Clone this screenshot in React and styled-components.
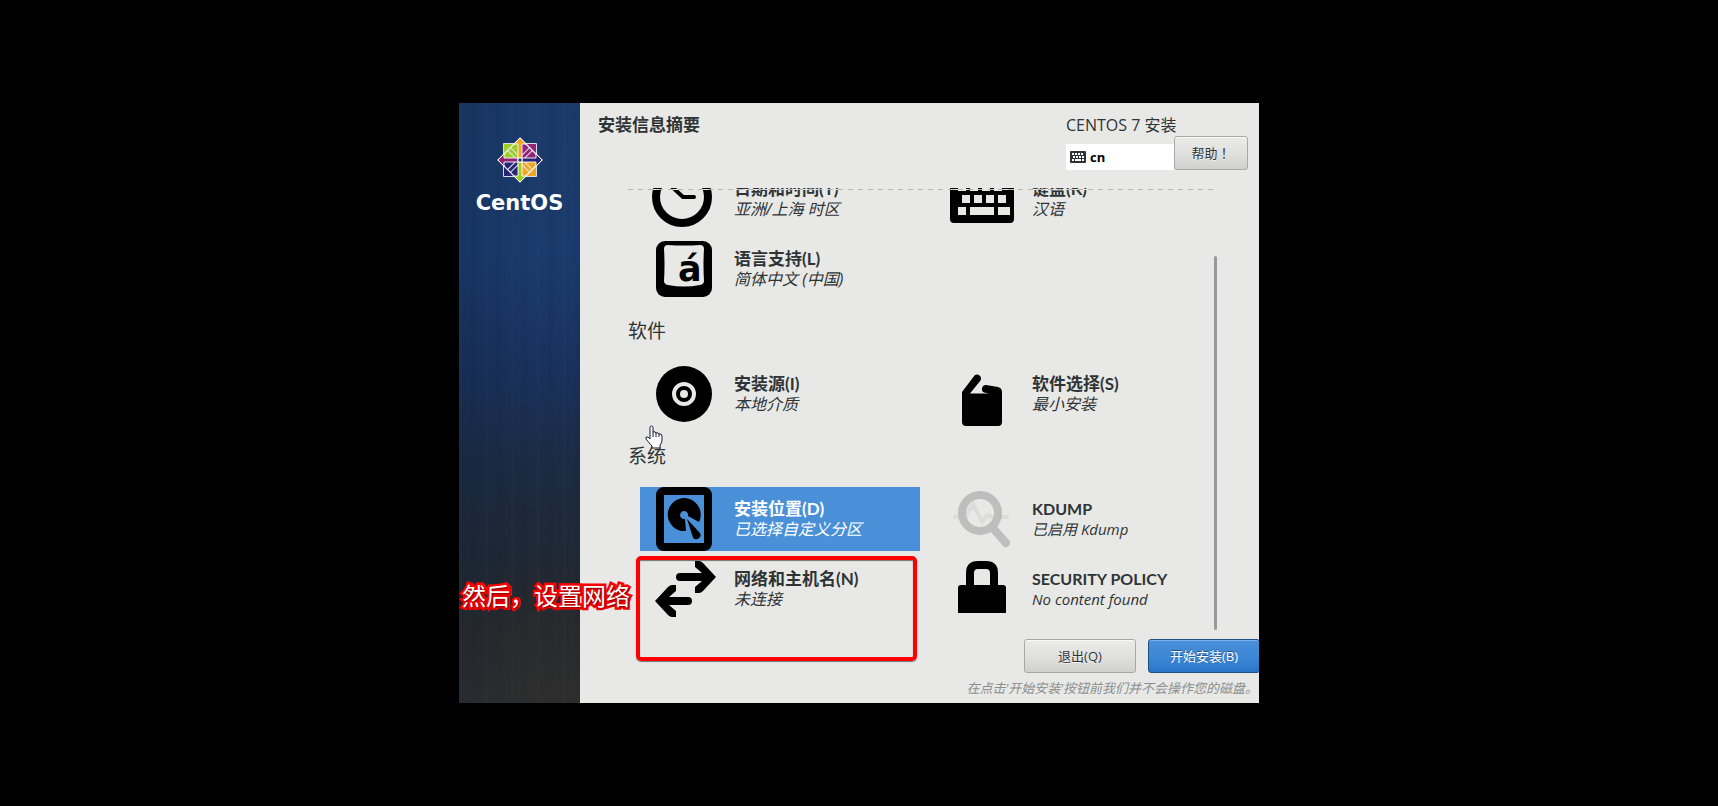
import React from 'react';
import styled, { createGlobalStyle } from 'styled-components';

const GlobalStyle = createGlobalStyle`
  *, *::before, *::after {
    box-sizing: border-box;
  }

  body {
    margin: 0;
    background: #000;
    color: #2e3436;
    font-family: 'Open Sans', 'Noto Sans CJK SC', sans-serif;
  }

  button {
    font-family: inherit;
  }

  h1, h2, p {
    margin: 0;
  }
`;

const Screen = styled.div`
  display: flex;
  align-items: center;
  justify-content: center;
  min-height: 100vh;
`;

const Installer = styled.div`
  position: relative; /* Anchor for the callout and the pointer */
  width: 100%;
  max-width: 800px;
`;

const Frame = styled.div`
  display: flex;
  overflow: hidden;
  background: #e8e8e6;
`;

const Sidebar = styled.aside`
  display: flex;
  flex-direction: column;
  align-items: center;
  flex: 0 0 121px;
  padding-top: 34px;
  background:
    linear-gradient(90deg, rgba(12, 28, 52, 0.2), rgba(12, 28, 52, 0) 60%),
    repeating-linear-gradient(90deg, rgba(255, 255, 255, 0.01) 0 3px, transparent 3px 11px, rgba(0, 0, 0, 0.03) 11px 17px, transparent 17px 26px),
    linear-gradient(#1b3a69 0%, #1a3b6d 25%, #19315c 45%, #1c2b43 60%, #1f2834 76%, #292a2c 88%, #2e2e2e 100%);
`;

const Brand = styled.div`
  margin-top: 7px;
  color: #fff;
  font: bold 21px/26px 'DejaVu Sans', sans-serif;
`;

const Main = styled.main`
  display: flex;
  flex-direction: column;
  flex: 1;
  min-width: 0;
`;

const Header = styled.header`
  display: flex;
  justify-content: space-between;
  padding: 10px 11px 18px 18px;
`;

const Title = styled.h1`
  font-size: 17px;
  font-weight: bold;
  line-height: 24px;
`;

const Product = styled.div`
  display: grid;
  grid-template-columns: 108px 74px;
  align-items: end;
`;

const ProductName = styled.p`
  grid-column: 1 / -1;
  font-size: 16px;
  line-height: 24px;
`;

const LayoutIndicator = styled.button`
  display: flex;
  align-items: center;
  gap: 4px;
  height: 26px;
  padding: 0 4px;
  border: 0;
  background: #fff;
  color: #000;
  font-size: 13px;
  font-weight: bold;
`;

const Button = styled.button`
  height: 34px;
  padding: 0 0 2px;
  border: 1px solid ${({ $primary }) => ($primary ? '#1c5187' : '#a8a8a6')};
  border-radius: 3px;
  background: ${({ $primary }) =>
    $primary ? 'linear-gradient(#4a90d9, #3a85d4 60%, #2a76c6)' : 'linear-gradient(#ebebea, #dededc 60%, #d0d0ce)'};
  box-shadow: inset 0 1px ${({ $primary }) => ($primary ? '#77b0ea' : '#f8f8f8')};
  color: ${({ $primary }) => ($primary ? '#fff' : '#2e3436')};
  font-size: 13px;
  text-shadow: ${({ $primary }) => ($primary ? '0 -1px rgba(0, 0, 0, 0.4)' : '0 1px rgba(255, 255, 255, 0.7)')};
`;

const HelpButton = styled(Button)`
  margin-top: -1px;
  font-family: 'Open Sans', 'Noto Sans CJK TC', sans-serif;
`;

const Viewport = styled.div`
  position: relative;
  margin: 0 41px 0 48px;
  overflow: hidden;

  /* Edge shown while there is more content above */
  &::before {
    content: '';
    position: absolute;
    top: 1px;
    left: 0;
    right: 4px;
    height: 1px;
    background: repeating-linear-gradient(90deg, #b4b5b4 0 5px, #e8e8e6 5px 10px);
  }
`;

const ScrollThumb = styled.div`
  position: absolute;
  top: 68px;
  right: 1px;
  bottom: 0;
  width: 3px;
  border-radius: 2px;
  background: #969a9a;
`;

/* Scrolled down a little, so the first row is partly cut off */
const Hub = styled.div`
  margin-top: -21px;
  padding: 0 0 9px;
`;

const SectionTitle = styled.h2`
  margin: 18px 0;
  font-size: 19px;
  font-weight: normal;
  line-height: 25px;
`;

const SpokeGrid = styled.div`
  display: grid;
  grid-template-columns: 1fr 1fr;
  gap: 6px 18px;
  padding-left: 12px;
`;

const Spoke = styled.button`
  display: flex;
  align-items: center;
  gap: 18px;
  padding: 0 0 0 12px;
  border: 0;
  background: ${({ $selected }) => ($selected ? '#4a90d9' : 'transparent')};
  color: ${({ $selected }) => ($selected ? '#fff' : '#2e3436')};
  text-align: left;
  white-space: nowrap;

  svg {
    flex: none;
    color: ${({ disabled }) => (disabled ? '#bebebe' : '#000')};
  }
`;

const SpokeText = styled.span`
  display: flex;
  flex-direction: column;
  line-height: 21px;
`;

const SpokeName = styled.span`
  font-family: Lato, 'Noto Sans CJK SC', sans-serif;
  font-size: ${({ $latin }) => ($latin ? '16px' : '17px')};
  font-weight: bold;
`;

const SpokeStatus = styled.span`
  font-size: ${({ $latin }) => ($latin ? '15px' : '16px')};
  font-style: italic;
`;

const Footer = styled.footer`
  padding: 9px 0 4px;
`;

const Actions = styled.div`
  display: grid;
  grid-template-columns: 112px 112px;
  justify-content: end;
  gap: 12px;
  margin-right: -1px;
`;

const Note = styled.p`
  margin: 5px 1px 0 0;
  color: #8b8f8f;
  font-size: 13px;
  font-style: italic;
  line-height: 21px;
  text-align: right;
`;

const Callout = styled.div`
  position: absolute;
  top: 453px;
  left: 177px;
  width: 281px;
  height: 105px;
  border: 4px solid #f00;
  border-radius: 5px;
  box-shadow: 0 1px 1px rgba(0, 0, 0, 0.5), inset 0 1px 1px rgba(0, 0, 0, 0.5);
  pointer-events: none;
`;

const CalloutLabel = styled.div`
  position: absolute;
  top: 475px;
  left: 3px;
  color: #fff;
  font-size: 24px;
  line-height: 36px;
  white-space: nowrap;
  paint-order: stroke fill;
  -webkit-text-stroke: 5px #f00;
  text-shadow: 1px 1px 2px rgba(0, 0, 0, 0.6);
`;

const Pointer = styled.svg`
  position: absolute;
  top: 322px;
  left: 186px;
`;

const Icon = ({ children }) => (
  <svg width="64" height="64" viewBox="0 0 64 64" fill="currentColor" aria-hidden="true">
    {children}
  </svg>
);

const ClockIcon = () => (
  <Icon>
    <circle cx="30" cy="30" r="26" fill="none" stroke="currentColor" strokeWidth="8" />
    <path d="M18 18L31 30H42" fill="none" stroke="currentColor" strokeWidth="4" strokeLinecap="round" strokeLinejoin="round" />
  </Icon>
);

const KeyboardIcon = () => (
  <Icon>
    <rect y="8" width="64" height="48" rx="4" />
    <g fill="#e8e8e6">
      {[8, 20, 32, 44].map((x) => (
        <rect key={x} x={x} y="16" width="8" height="8" />
      ))}
      {[12, 24, 36, 48].map((x) => (
        <rect key={x} x={x} y="28" width="8" height="8" />
      ))}
      <path d="M8 40h8v8H8zM20 40h24v8H20zM48 40h12v8H48z" />
    </g>
  </Icon>
);

const LanguageIcon = () => (
  <Icon>
    <rect x="4" y="4" width="56" height="56" rx="9" />
    <path d="M16 8Q32 9 48 8Q52 8 52 12Q51 28 52 44Q52 47 48 48Q32 51 16 48Q12 47 12 44Q13 28 12 12Q12 8 16 8Z" fill="#e8e8e6" />
    <text x="26" y="44" fontFamily="DejaVu Sans, sans-serif" fontSize="35" fontWeight="bold">á</text>
  </Icon>
);

const DiscIcon = () => (
  <Icon>
    <circle cx="32" cy="32" r="28" />
    <circle cx="32" cy="32" r="10" fill="none" stroke="#e8e8e6" strokeWidth="4" />
    <circle cx="32" cy="32" r="4" fill="#e8e8e6" />
  </Icon>
);

const PackageIcon = () => (
  <Icon>
    <path d="M12 30L24.500 13.500A4 4 0 0 1 30.500 18.500L20 31.500H39L34 30.500A4 4 0 0 1 36 23L48 25Q52 26 52 30V60Q52 64 48 64H16Q12 64 12 60Z" />
  </Icon>
);

const DiskIcon = () => (
  <Icon>
    <path fillRule="evenodd" d="M12 0H52A8 8 0 0 1 60 8V56A8 8 0 0 1 52 64H12A8 8 0 0 1 4 56V8A8 8 0 0 1 12 0ZM12 8V56H52V8Z" />
    <path d="M33 32A4 4 0 1 1 36 29L47 35A16.500 16.500 0 1 0 34 44Z" />
    <path d="M35 32L47.500 45.500A4 4 0 1 1 41 50.500Z" />
  </Icon>
);

const NetworkIcon = () => (
  <Icon>
    <path d="M28 16H50L43 10V4H47Q49 4 51 6L64 20L51 34Q49 36 47 36H43V30L50 24H28A4 4 0 0 1 28 16Z" />
    <path d="M36 40H17L24 34V28H20Q18 28 16 30L3 44L16 58Q18 60 20 60H24V54L17 48H36A4 4 0 0 0 36 40Z" />
  </Icon>
);

const KdumpIcon = () => (
  <Icon>
    <path d="M3 30H15L23 17L32 34L38 28L42 30H59" fill="none" stroke="#dcdcda" strokeWidth="4" />
    <circle cx="30" cy="26" r="18" fill="none" stroke="currentColor" strokeWidth="8" />
    <path d="M42 40L56 56" stroke="currentColor" strokeWidth="8" strokeLinecap="round" />
  </Icon>
);

const LockIcon = () => (
  <Icon>
    <path d="M20 30V16Q20 8 28 8H36Q44 8 44 16V30" fill="none" stroke="currentColor" strokeWidth="8" />
    <path d="M11 28H53Q56 28 56 31V56H8V31Q8 28 11 28Z" />
  </Icon>
);

const SmallKeyboardIcon = () => (
  <svg width="16" height="12" viewBox="0 0 16 12" aria-hidden="true">
    <rect width="16" height="12" rx="1" fill="#2e3436" />
    <path d="M2 3h2M5 3h2M8 3h2M11 3h2M3 6h2M6 6h2M9 6h2M12 6h2M2 9h2M5 9h6M12 9h2" stroke="#fff" strokeWidth="2" />
  </svg>
);

const CentosLogo = () => (
  <svg width="46" height="46" viewBox="-23 -23 46 46" aria-hidden="true">
    <g stroke="#d9dbe6">
      <path d="M-16.500 -16.500H-1V-1H-16.500Z" fill="#9ccd2a" />
      <path d="M1 -16.500H16.500V-1H1Z" fill="#932279" />
      <path d="M-16.500 1H-1V16.500H-16.500Z" fill="#262577" />
      <path d="M1 1H16.500V16.500H1Z" fill="#efa724" />
    </g>
    <path d="M-11 -11L11 11M11 -11L-11 11" stroke="#e4e5ee" strokeWidth="5" />
    <g strokeWidth="3">
      <path d="M-11 -11L-1 -1" stroke="#9ccd2a" />
      <path d="M11 -11L1 -1" stroke="#932279" />
      <path d="M-11 11L-1 1" stroke="#262577" />
      <path d="M11 11L1 1" stroke="#efa724" />
    </g>
    <path d="M0 -22L22 0L0 22L-22 0Z" fill="none" stroke="#fff" strokeWidth="1.200" />
    <g stroke="#fff" strokeWidth="0.900" strokeLinejoin="round">
      <path d="M0 -22L6 -16H2V-2H-2V-16H-6Z" fill="#efa724" />
      <path d="M22 0L16 6V2H2V-2H16V-6Z" fill="#262577" />
      <path d="M0 22L-6 16H-2V2H2V16H6Z" fill="#9ccd2a" />
      <path d="M-22 0L-16 -6V-2H-2V2H-16V6Z" fill="#932279" />
    </g>
    <rect x="-2" y="-2" width="4" height="4" fill="#1b3a69" stroke="#fff" />
  </svg>
);

const sections = [
  {
    spokes: [
      { name: '日期和时间(T)', status: '亚洲/上海 时区', icon: ClockIcon },
      { name: '键盘(K)', status: '汉语', icon: KeyboardIcon },
      { name: '语言支持(L)', status: '简体中文 (中国)', icon: LanguageIcon },
    ],
  },
  {
    title: '软件',
    spokes: [
      { name: '安装源(I)', status: '本地介质', icon: DiscIcon },
      { name: '软件选择(S)', status: '最小安装', icon: PackageIcon },
    ],
  },
  {
    title: '系统',
    spokes: [
      { name: '安装位置(D)', status: '已选择自定义分区', icon: DiskIcon, selected: true },
      { name: 'KDUMP', status: '已启用 Kdump', icon: KdumpIcon, disabled: true, latin: true },
      { name: '网络和主机名(N)', status: '未连接', icon: NetworkIcon },
      { name: 'SECURITY POLICY', status: 'No content found', icon: LockIcon, latin: true },
    ],
  },
];

const Section = ({ title, spokes }) => (
  <section>
    {title && <SectionTitle>{title}</SectionTitle>}
    <SpokeGrid>
      {spokes.map(({ name, status, icon: SpokeIcon, selected, disabled, latin }) => (
        <Spoke key={name} type="button" $selected={selected} disabled={disabled}>
          <SpokeIcon />
          <SpokeText>
            <SpokeName $latin={latin}>{name}</SpokeName>
            <SpokeStatus $latin={latin}>{status}</SpokeStatus>
          </SpokeText>
        </Spoke>
      ))}
    </SpokeGrid>
  </section>
);

const App = () => (
  <>
    <GlobalStyle />
    <Screen>
      <Installer>
        <Frame>
          <Sidebar>
            <CentosLogo />
            <Brand>CentOS</Brand>
          </Sidebar>
          <Main>
            <Header>
              <Title>安装信息摘要</Title>
              <Product>
                <ProductName>CENTOS 7 安装</ProductName>
                <LayoutIndicator type="button">
                  <SmallKeyboardIcon />
                  cn
                </LayoutIndicator>
                <HelpButton type="button">帮助！</HelpButton>
              </Product>
            </Header>
            <Viewport>
              <Hub>
                {sections.map((section, index) => (
                  <Section key={index} {...section} />
                ))}
              </Hub>
              <ScrollThumb />
            </Viewport>
            <Footer>
              <Actions>
                <Button type="button">退出(Q)</Button>
                <Button type="button" $primary>开始安装(B)</Button>
              </Actions>
              <Note>在点击'开始安装'按钮前我们并不会操作您的磁盘。</Note>
            </Footer>
          </Main>
        </Frame>
        <Callout />
        <CalloutLabel>然后，设置网络</CalloutLabel>
        <Pointer width="18" height="24" viewBox="0 0 18 24" aria-hidden="true">
          <path
            d="M5 14V2.500Q5 1 6.500 1T8 2.500V7Q10.500 6 11 8Q13.500 7 14 9Q17 8.500 17 11V15Q17 18 15 20V23H7V21Q4 18 1 14Q0 11.500 3 12Z"
            fill="#fff"
            stroke="#1a1a35"
            strokeLinejoin="round"
          />
          <path d="M8 7V12M11 8V12M14 9V12" stroke="#1a1a35" />
        </Pointer>
      </Installer>
    </Screen>
  </>
);

export default App;
